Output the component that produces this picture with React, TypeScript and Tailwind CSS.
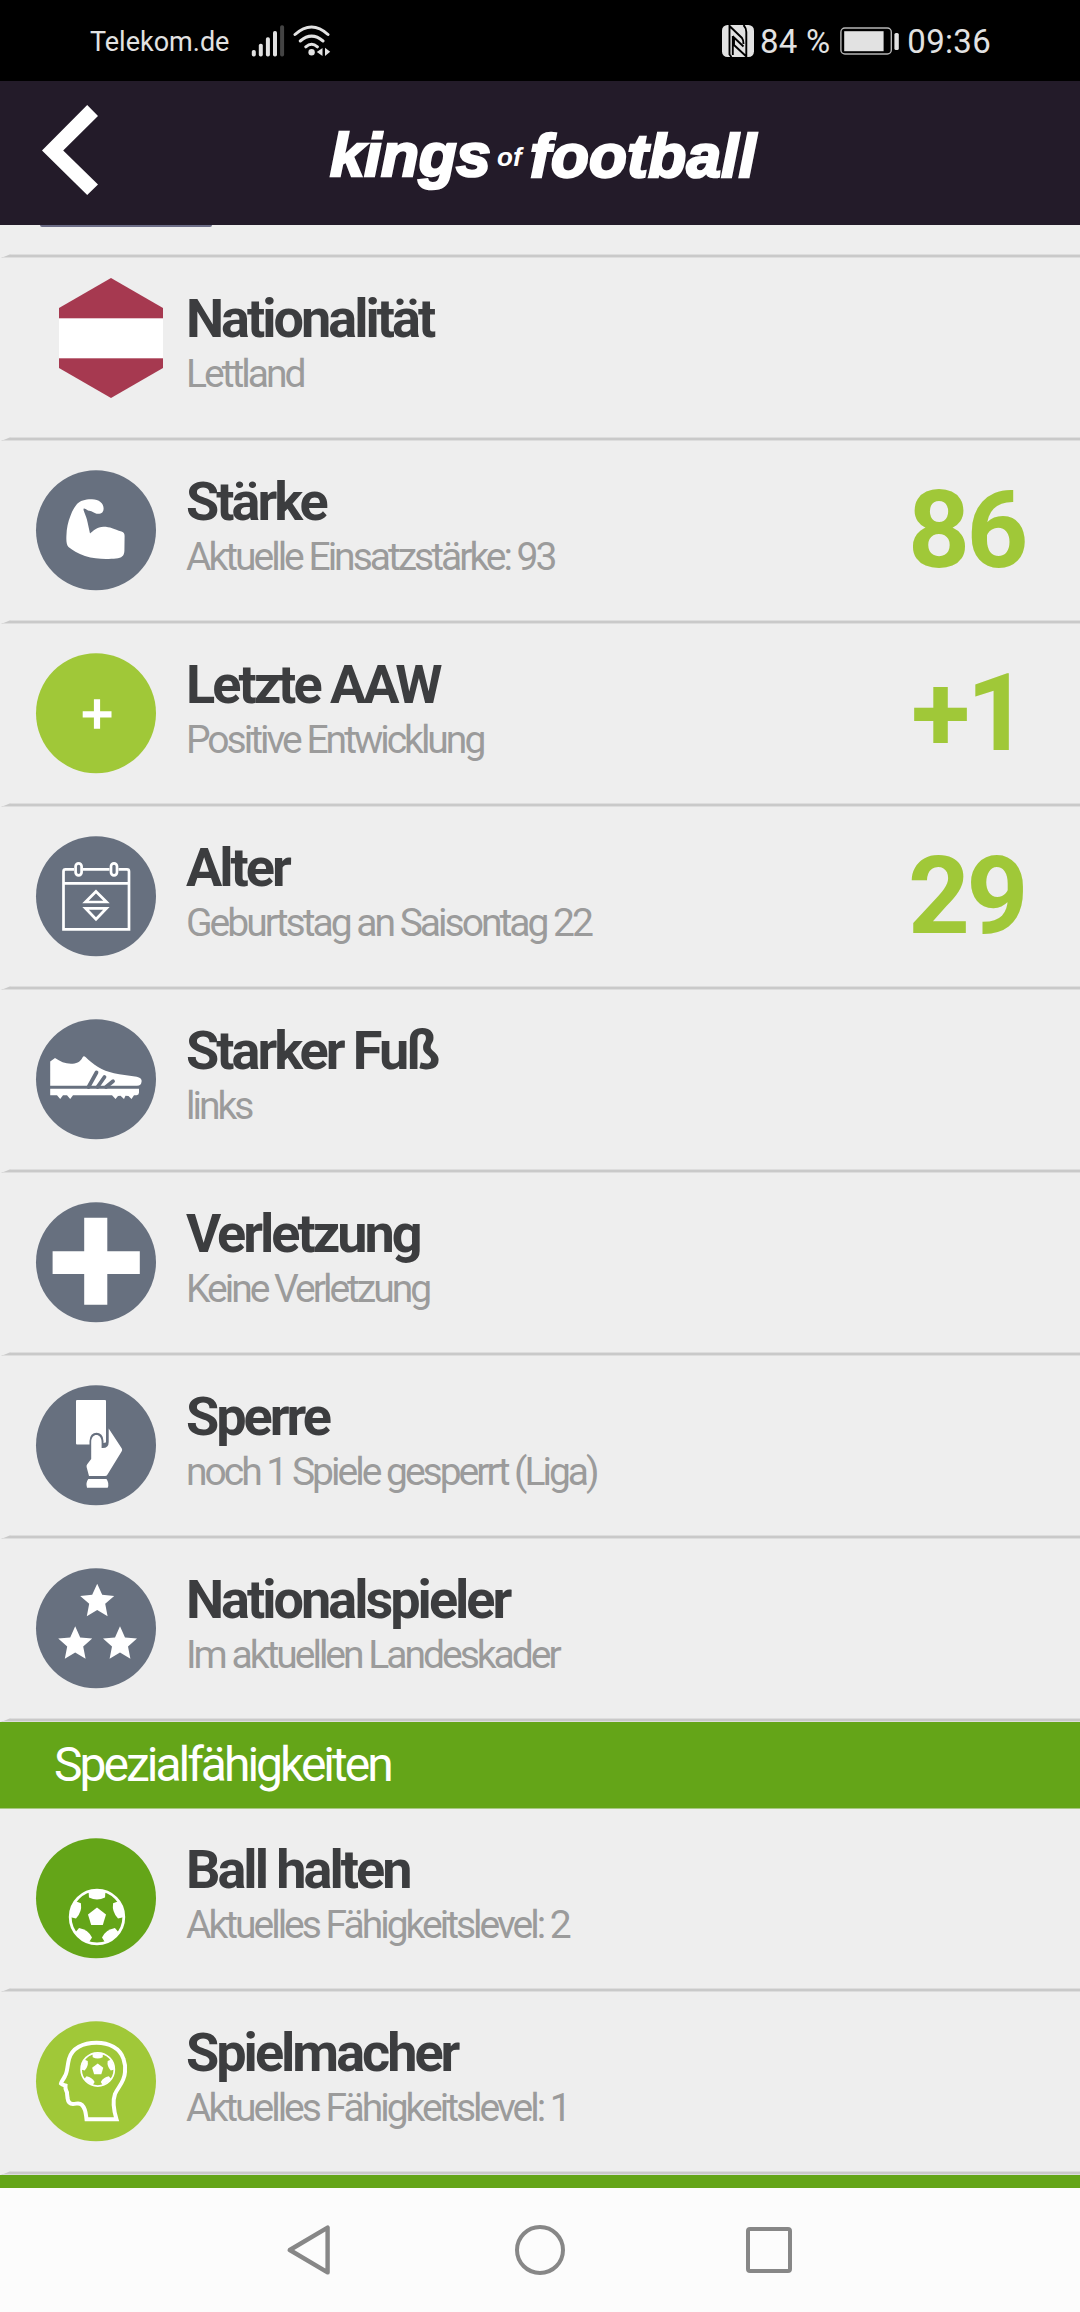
import type { ReactNode } from 'react';

const SLATE = '#67707f';
const LIME = '#a0c838';
const GREEN = '#64a518';

const STAR = '0,-17.5 5,-6.4 17,-5.2 8,2.6 10.4,15 0,8.8 -10.4,15 -8,2.6 -17,-5.2 -5,-6.4';

function Disc({ color, children }: { color: string; children: ReactNode }) {
  return (
    <svg viewBox="0 0 120 120" className="ml-[36px] mr-[30px] size-[120px] shrink-0 overflow-visible">
      <circle cx="60" cy="60.2" r="60" fill={color} />
      {children}
    </svg>
  );
}

function Ball({ transform }: { transform: string }) {
  return (
    <g transform={transform} fill="#fff">
      <circle r="26.8" fill="none" stroke="#fff" strokeWidth="2.8" />
      <path d="M0 -9.5L9 -2.6L5.8 8H-5.8L-9 -2.6Z" />
      {[0, 72, 144, 216, 288].map((a) => (
        <path key={a} d="M-8.5 -26H8.5L8 -19.5Q0 -15.5 -8 -19.5Z" transform={`rotate(${a})`} />
      ))}
    </g>
  );
}

function FlagIcon() {
  return (
    <svg viewBox="0 0 104 120" className="ml-[59px] mr-[23px] h-[120px] w-[104px] shrink-0 -mt-[9px]">
      <polygon points="52,0 104,30 104,90 52,120 0,90 0,30" fill="#a63950" />
      <rect y="40.3" width="104" height="40" fill="#fff" />
    </svg>
  );
}

function MuscleIcon() {
  return (
    <Disc color={SLATE}>
      <path
        fill="#fff"
        d="M41 34C44 30.5 50 29 56 29.2C63 29.4 67.6 33 67.6 38.3C67.6 42 66 43.8 62 43.8C58 43.8 56 40.5 53 40.8C51 41 49.5 38 47.6 38.7C47 41 50 45 51.5 52L54 63.5C57 61 61 56.7 67.6 56.7C74 56.7 78 59 85.5 61.5C88 62.5 88.6 63.5 88.6 66L88.4 81C88 86 86 87.8 80 88.5C72 89.3 60 89.6 49 86C42 83.5 36 80 32.5 77C30.5 75 30.2 71 30.4 66C30.6 58 32 52 34.4 46C36 41.5 38 37.5 41 34Z"
      />
    </Disc>
  );
}

function PlusIcon() {
  return (
    <Disc color={LIME}>
      <path d="M46.7 61.3H75.5M61 46.2V75.8" stroke="#fff" strokeWidth="6.2" />
    </Disc>
  );
}

function CalendarIcon() {
  return (
    <Disc color={SLATE}>
      <g fill="none" stroke="#fff" strokeWidth="2.7">
        <path d="M38 33.4H29.5Q27.5 33.4 27.5 35.4V93.3H93V35.4Q93 33.4 91 33.4H82.5M47 33.4H73.5M27.5 47.3H93" />
        <rect x="39.6" y="27.3" width="6" height="12" rx="3" />
        <rect x="75" y="27.3" width="6" height="12" rx="3" />
        <path d="M60 55.5L70.5 66H49.5ZM60 83.3L70.5 72.3H49.5Z" />
      </g>
    </Disc>
  );
}

function ShoeIcon() {
  return (
    <Disc color={SLATE}>
      <g fill="#fff">
        <path d="M14.2 42.5L19 39C24 42.5 29 44.7 35 44.7C40 44.7 44 43.5 46.5 38.5C47.2 37 48.3 36.8 49.5 38C57 45.5 66 51.5 78 54.3C85 56 92 56.5 99 57.5C104 58.3 106 60 105.6 62.5C105.2 65.5 104 66.7 101 66.7H14.2Z" />
        <path d="M14.2 69.8H103V73.5Q103 76 100.5 76.2H98L95.5 80L92.5 77L89.5 76.7L88 80L84.5 76.8L82 77L79.5 80L76 76.2H37L34.2 80L31 76.2H27L24.2 80L21 76.2H14.2Z" />
      </g>
      <g stroke={SLATE} strokeWidth="3.8" fill="none">
        <path d="M52.5 68L60.5 53.5M61.5 68L68.5 58M70 68L77 62.3" strokeLinecap="round" />
      </g>
    </Disc>
  );
}

function CrossIcon() {
  return (
    <Disc color={SLATE}>
      <path d="M48.2 15.7H71.3V49.3H103.8V72H71.3V102.8H48.2V72H16.6V49.3H48.2Z" fill="#fff" />
    </Disc>
  );
}

function CardIcon() {
  return (
    <Disc color={SLATE}>
      <rect x="40" y="15" width="30" height="44.5" rx="1" fill="#fff" />
      <path d="M54.7 61V56C54.7 46.5 66.3 46.5 66.3 56V62Q71.7 63 71.7 57" fill={SLATE} stroke={SLATE} strokeWidth="2.4" />
      <path
        d="M55.2 74V57C55.2 47.8 65.6 47.8 65.6 57V63Q72.7 63.6 72.7 57V43.5L85.8 63.5Q86.7 65 85.6 66.5L71.5 89.5Q70.7 91 69 91H53L50.6 82Q50.3 80.5 51.2 79.3Z"
        fill="#fff"
      />
      <path d="M52.3 94H70.5Q73.5 98.5 71.7 102.7H51Q49.4 98 52.3 94Z" fill="#fff" />
    </Disc>
  );
}

function StarsIcon() {
  return (
    <Disc color={SLATE}>
      <g fill="#fff">
        <polygon points={STAR} transform="translate(61.2 33.2)" />
        <polygon points={STAR} transform="translate(39.2 75.8)" />
        <polygon points={STAR} transform="translate(84 75.8)" />
      </g>
    </Disc>
  );
}

function BallIcon() {
  return (
    <Disc color={GREEN}>
      <Ball transform="translate(61 79)" />
    </Disc>
  );
}

function HeadIcon() {
  return (
    <Disc color={LIME}>
      <path
        fill="none"
        stroke="#fff"
        strokeWidth="4"
        d="M50.5 98.3H80.5C77 87 76.5 80 79 73C82 66 88.5 61 89 51C89.5 46 89 42 87.5 38C84 27 73 21.8 60.5 21.8C47 21.8 36 27 33 38C31 46 31.5 51 29 55C27 59 25.5 60 25 62.5C26.5 64 28 64 29.5 64.5C29 68 30 69 31 71.5C31 74 31.5 75 31.5 77C32 81 33.5 83 37 83C41 83 43 81 46 84C50 88 49.8 93 50.5 98.3Z"
      />
      <Ball transform="translate(61.7 48.4) scale(.62)" />
    </Disc>
  );
}

const ATTRIBUTES = [
  { icon: <FlagIcon />, title: 'Nationalität', info: 'Lettland' },
  { icon: <MuscleIcon />, title: 'Stärke', info: 'Aktuelle Einsatzstärke: 93', value: '86' },
  { icon: <PlusIcon />, title: 'Letzte AAW', info: 'Positive Entwicklung', value: '+1' },
  { icon: <CalendarIcon />, title: 'Alter', info: 'Geburtstag an Saisontag 22', value: '29' },
  { icon: <ShoeIcon />, title: 'Starker Fuß', info: 'links' },
  { icon: <CrossIcon />, title: 'Verletzung', info: 'Keine Verletzung' },
  { icon: <CardIcon />, title: 'Sperre', info: 'noch 1 Spiele gesperrt (Liga)' },
  { icon: <StarsIcon />, title: 'Nationalspieler', info: 'Im aktuellen Landeskader' },
];

const SKILLS = [
  { icon: <BallIcon />, title: 'Ball halten', info: 'Aktuelles Fähigkeitslevel: 2' },
  { icon: <HeadIcon />, title: 'Spielmacher', info: 'Aktuelles Fähigkeitslevel: 1' },
];

function Divider() {
  return (
    <div className="h-[4px] border-y border-[#dddddd] bg-[#c9c9c9] [clip-path:polygon(11px_0,100%_0,100%_100%,1px_100%)]" />
  );
}

function Row({ icon, title, info, value }: { icon: ReactNode; title: string; info: string; value?: string }) {
  return (
    <div className="flex h-[179px] items-start pt-[29px]">
      {icon}
      <div className="grow pt-[5px]">
        <h3 className="text-[54px] font-bold leading-[54px] tracking-[-3px] text-[#3c3d3f]">{title}</h3>
        <p className="mt-[8px] text-[39px] leading-[40px] tracking-[-3px] text-[#9b9b9b]">{info}</p>
      </div>
      {value && (
        <div className="mr-[55px] pt-[6px] text-[108px] font-bold leading-[109px] tracking-[-3.5px] text-[#a0c838]">
          {value}
        </div>
      )}
    </div>
  );
}

function StatusBar() {
  return (
    <div className="flex h-[81px] items-center bg-black pt-[1px] text-[#e2e2e2]">
      <span className="ml-[90px] w-[140px] pt-[2px] text-[27px] leading-none">Telekom.de</span>
      <svg viewBox="0 0 34 32" className="ml-[21px] h-[32px] w-[34px]" fill="#e2e2e2">
        <rect x="0.8" y="25" width="4" height="6.5" rx="1.8" />
        <rect x="7.8" y="18.7" width="4" height="12.8" rx="1.8" />
        <rect x="14.9" y="12.3" width="4" height="19.2" rx="1.8" />
        <rect x="22" y="6" width="4" height="25.5" rx="1.8" />
        <rect x="29.1" y="0.3" width="4" height="31.2" rx="1.8" fill="#444" />
      </svg>
      <svg viewBox="0 0 40 32" className="ml-[7px] h-[32px] w-[40px]" fill="none" stroke="#e2e2e2" strokeWidth="3" strokeLinecap="round">
        <path d="M3 9.5Q19.6 -5.5 36 9.5M8.3 16Q19.6 6.3 31 16M13.8 21.8Q19.6 16.8 25.4 21.8" />
        <circle cx="19.6" cy="27.3" r="3.2" fill="#e2e2e2" stroke="none" />
        <path d="M24.8 27L30.5 23V31ZM33 22.7L38.2 26.7L33 31Z" fill="#e2e2e2" stroke="none" />
      </svg>
      <svg viewBox="0 0 32 32" className="ml-auto h-[32px] w-[32px]">
        <rect width="32" height="32" rx="5.5" fill="#e2e2e2" />
        <path d="M7.5 0V29.5L9.5 32M7.5 1L20 13Q21.5 15 21.5 19M21.5 0Q24.3 3 24.3 7V32M24.3 31.5L12 20V12.5L21.5 21.5M10.8 11V30" fill="none" stroke="#000" strokeWidth="1.9" />
      </svg>
      <span className="ml-[6px] text-[33px] leading-none tracking-[0.2px]">84 %</span>
      <svg viewBox="0 0 60 28" className="ml-[10px] h-[28px] w-[60px]">
        <rect x="0.9" y="1" width="50.4" height="26" rx="4" fill="none" stroke="#b5b5b5" strokeWidth="1.4" />
        <rect x="4.2" y="4.2" width="39.4" height="20" fill="#e2e2e2" />
        <rect x="54.4" y="6" width="4.4" height="17" rx="1.6" fill="#e2e2e2" />
      </svg>
      <span className="ml-[7px] mr-[89px] text-[33px] leading-none tracking-[0.3px]">09:36</span>
    </div>
  );
}

function Header() {
  return (
    <div className="flex h-[144px] items-start bg-[#231b29] text-white">
      <svg viewBox="0 0 56 90" className="ml-[42px] mt-[24px] h-[90px] w-[56px]" fill="#fff">
        <polygon points="0,45.5 45.2,0 56,11 21.2,45.5 56,79.5 45.2,90" />
      </svg>
      <div className="ml-[232px] flex items-start whitespace-nowrap font-['Liberation_Sans',sans-serif] text-[62px] font-bold italic leading-none">
        <span className="mt-[43px] w-[167px] tracking-[-0.3px] [-webkit-text-stroke:2.6px_white]">kings</span>
        <span className="mt-[63px] w-[33px] text-[26px] leading-none">of</span>
        <span className="mt-[44px] tracking-[0.3px] [-webkit-text-stroke:2.6px_white]">football</span>
      </div>
    </div>
  );
}

function NavBar() {
  return (
    <div className="flex h-[124px] items-center bg-[#fcfcfc]">
      <svg viewBox="0 0 44 50" className="ml-[287px] h-[50px] w-[44px]" fill="none" stroke="#878787" strokeWidth="4.4" strokeLinejoin="round">
        <path d="M2.8 25L40.6 2.6V47.4Z" />
      </svg>
      <div className="ml-[184px] size-[50px] rounded-full border-[4.5px] border-[#878787]" />
      <div className="ml-[181px] size-[46px] rounded-[4px] border-[4.5px] border-[#878787]" />
    </div>
  );
}

export default function App() {
  return (
    <div className="flex h-[2312px] w-[1080px] flex-col overflow-hidden bg-[#eeeeee] font-['Roboto',sans-serif]">
      <StatusBar />
      <Header />
      <div className="h-[29px]">
        <div className="ml-[40px] h-[2px] w-[172px] rounded-b-[2px] bg-[#6c6d87]" />
      </div>
      {ATTRIBUTES.map((a) => (
        <div key={a.title}>
          <Divider />
          <Row {...a} />
        </div>
      ))}
      <Divider />
      <div className="flex h-[87px] items-center border-b border-[#a8c884] bg-[#64a518]">
        <h2 className="ml-[54px] text-[48px] leading-none tracking-[-3px] text-white">Spezialfähigkeiten</h2>
      </div>
      {SKILLS.map((s) => (
        <div key={s.title}>
          <Row {...s} />
          <Divider />
        </div>
      ))}
      <div className="h-[13px] bg-[#64a518]" />
      <NavBar />
    </div>
  );
}
